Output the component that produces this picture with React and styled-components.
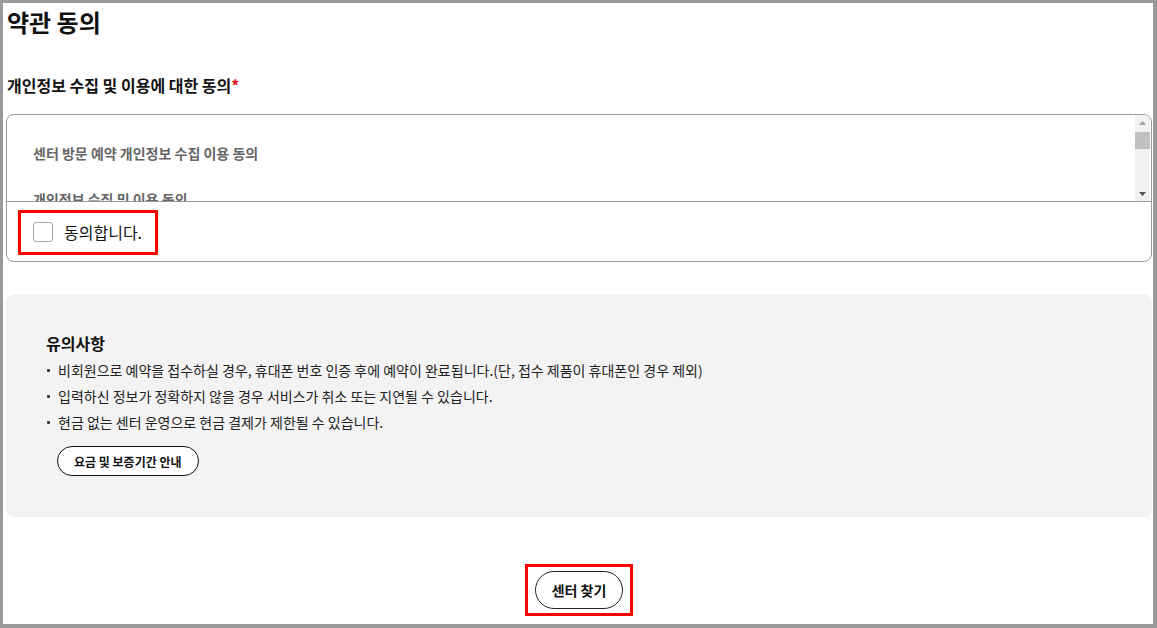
import React from "react";
import styled, { createGlobalStyle } from "styled-components";

const Global = createGlobalStyle`
  html, body { margin: 0; padding: 0; background: #fff; }
  body { font-family: "Noto Sans CJK KR", "Noto Sans", sans-serif; color: #111; }
  * { box-sizing: border-box; }
`;

const Frame = styled.div`
  width: 1157px;
  height: 628px;
  border-style: solid;
  border-color: #9a9a9a;
  border-width: 3px 4px 4px 3px;
  overflow: hidden;
  display: flex;
  flex-direction: column;
  padding: 0 1px 0 3px;
`;

const Title = styled.h2`
  margin: 4px 0 0 1px;
  font-size: 24px;
  line-height: 30px;
  font-weight: 700;
  color: #111;
`;

const Label = styled.h3`
  margin: 37px 0 0 1px;
  font-size: 16px;
  line-height: 22px;
  font-weight: 700;
  color: #111;
  span { color: #e0101a; }
`;

const TermsBox = styled.div`
  margin-top: 18px;
  border: 1px solid #999;
  border-radius: 8px;
  overflow: hidden;
`;

const ScrollArea = styled.div`
  height: 87px;
  display: flex;
  border-bottom: 1px solid #999;
`;

const ScrollContent = styled.div`
  flex: 1;
  overflow: hidden;
  padding: 26px 26px 20px;
  color: #666;
`;

const Track = styled.div`
  width: 15px;
  margin-right: 1px;
  background: #f1f1f1;
  display: flex;
  flex-direction: column;
`;

const ArrowBtn = styled.div`
  height: 15px;
  display: flex;
  align-items: center;
  justify-content: center;
`;

const Thumb = styled.div`
  height: 17px;
  margin-top: 2px;
  background: #c1c1c1;
`;

const TrackFill = styled.div`
  flex: 1;
`;

const TermHeading = styled.h4`
  margin: 0 0 22px;
  font-size: 14px;
  line-height: 24px;
  font-weight: 700;
  color: #666;
`;

const TermText = styled.p`
  margin: 0 0 22px;
  font-size: 13px;
  line-height: 20px;
  color: #777;
`;

const AgreeRow = styled.div`
  height: 59px;
  display: flex;
  align-items: center;
  padding-left: 11px;
  padding-top: 1px;
`;

const Highlight = styled.label`
  display: inline-flex;
  align-items: center;
  gap: 11px;
  border: 3px solid #f00;
  height: 45px;
  padding: 0 13px 0 12px;
  cursor: pointer;
  font-size: 16px;
  color: #111;
`;

const Check = styled.span`
  width: 20px;
  height: 20px;
  border: 1px solid #aaa;
  border-radius: 3px;
  background: #fff;
`;

const Notice = styled.div`
  margin-top: 32px;
  background: #f3f3f3;
  border-radius: 8px;
  height: 223px;
  padding: 37px 40px 0;
`;

const NoticeTitle = styled.h4`
  margin: 0 0 2px;
  font-size: 16px;
  line-height: 24px;
  font-weight: 700;
  color: #111;
`;

const List = styled.ul`
  margin: 0;
  padding: 0;
  list-style: none;
`;

const Item = styled.li`
  position: relative;
  padding-left: 12px;
  font-size: 14px;
  line-height: 26px;
  color: #222;
  &::before {
    content: "";
    position: absolute;
    left: 1px;
    top: 12px;
    width: 3px;
    height: 3px;
    border-radius: 1px;
    background: #333;
  }
`;

const PillSmall = styled.button`
  margin: 11px 0 0 11px;
  height: 30px;
  padding: 0 16px;
  border: 1px solid #111;
  border-radius: 15px;
  background: #fff;
  font-family: inherit;
  font-size: 12px;
  font-weight: 700;
  color: #111;
`;

const Bottom = styled.div`
  display: flex;
  justify-content: center;
  margin-top: 47px;
`;

const RedBox = styled.div`
  border: 3px solid #f00;
  padding: 4px 7px;
  display: flex;
`;

const FindBtn = styled.button`
  height: 38px;
  padding: 0 16px;
  border: 1px solid #222;
  border-radius: 19px;
  background: #fff;
  font-family: inherit;
  font-size: 14px;
  font-weight: 700;
  color: #111;
`;

const notices = [
  "비회원으로 예약을 접수하실 경우, 휴대폰 번호 인증 후에 예약이 완료됩니다.(단, 접수 제품이 휴대폰인 경우 제외)",
  "입력하신 정보가 정확하지 않을 경우 서비스가 취소 또는 지연될 수 있습니다.",
  "현금 없는 센터 운영으로 현금 결제가 제한될 수 있습니다.",
];

function Scrollbar() {
  return (
    <Track>
      <ArrowBtn>
        <svg width="7" height="4" viewBox="0 0 7 4">
          <path d="M0 4h7L3.5 0z" fill="#a3a3a3" />
        </svg>
      </ArrowBtn>
      <Thumb />
      <TrackFill />
      <ArrowBtn>
        <svg width="7" height="4" viewBox="0 0 7 4">
          <path d="M0 0h7L3.5 4z" fill="#505050" />
        </svg>
      </ArrowBtn>
    </Track>
  );
}

export default function App() {
  return (
    <>
      <Global />
      <Frame>
        <Title>약관 동의</Title>
        <Label>
          개인정보 수집 및 이용에 대한 동의<span>*</span>
        </Label>
        <TermsBox>
          <ScrollArea>
            <ScrollContent>
              <TermHeading>센터 방문 예약 개인정보 수집 이용 동의</TermHeading>
              <TermHeading>개인정보 수집 및 이용 동의</TermHeading>
              <TermText>
                회사는 센터 방문 예약 서비스 제공을 위하여 아래와 같이 개인정보를 수집 및 이용합니다.
              </TermText>
            </ScrollContent>
            <Scrollbar />
          </ScrollArea>
          <AgreeRow>
            <Highlight>
              <Check />
              동의합니다.
            </Highlight>
          </AgreeRow>
        </TermsBox>
        <Notice>
          <NoticeTitle>유의사항</NoticeTitle>
          <List>
            {notices.map((n) => (
              <Item key={n}>{n}</Item>
            ))}
          </List>
          <PillSmall>요금 및 보증기간 안내</PillSmall>
        </Notice>
        <Bottom>
          <RedBox>
            <FindBtn>센터 찾기</FindBtn>
          </RedBox>
        </Bottom>
      </Frame>
    </>
  );
}
